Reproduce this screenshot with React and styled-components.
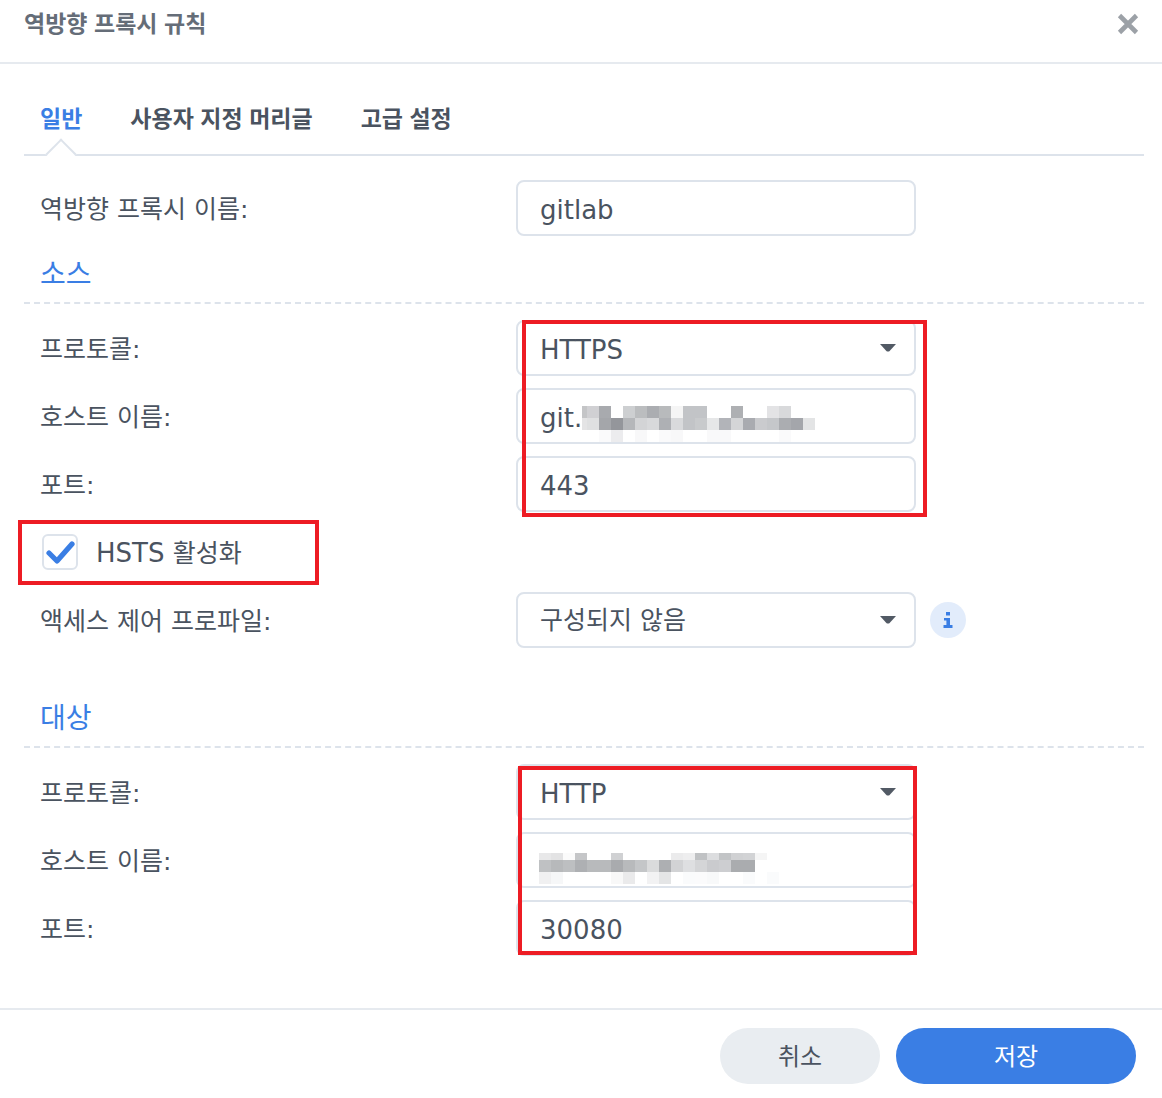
import React from "react";
import styled, { createGlobalStyle } from "styled-components";

const fontStack = `"DejaVu Sans", "Noto Sans CJK KR", sans-serif`;

const GlobalStyle = createGlobalStyle`
  * { box-sizing: border-box; }
  html, body { margin: 0; background: #fff; }
  body { font-family: ${fontStack}; color: #4a5360; }
`;

const gitMosaic = [
  ["#c4c5c7", "#d0d0d3", "#a8aaae", "#fff", "#cdcfd1", "#bbbdbf", "#abadb1", "#b8babc", "#f5f5f5", "#c2c4c7", "#c2c4c7", "#fff", "#fff", "#aeb0b3", "#fff", "#fff", "#e3e3e5", "#d8d9db"],
  ["#e4e4e5", "#dfe0e1", "#a4a6aa", "#94969b", "#b5b7ba", "#d3d4d6", "#d8d9db", "#aeb0b4", "#d9dadc", "#c2c4c7", "#c8cacc", "#e6e7e8", "#b2b4b9", "#d4d5d7", "#a9abb0", "#cacbce", "#c5c7ca", "#abadb1", "#a4a6ab", "#e3e4e5"],
  ["#fff", "#fff", "#fafafb", "#ececee", "#fff", "#f8f8f9", "#fff", "#fafafb", "#f8f8f9", "#fff", "#fff", "#f9f9fa", "#f9f9fa", "#fff", "#fff", "#fff", "#fff", "#fafafb"],
];

const hostMosaic = [
  ["#e8e8e9", "#e3e3e4", "#fbfbfb", "#c5c6c8", "#fff", "#fff", "#d0d1d3", "#fff", "#fff", "#fff", "#fff", "#ebebec", "#eeeeef", "#c0c2c4", "#dcdddf", "#c2c4c6", "#d0d1d3", "#d2d3d5", "#f5f5f5"],
  ["#bfc1c3", "#b7b9bb", "#bdbfc1", "#aeb0b3", "#b8babc", "#b8babc", "#a9abae", "#b8babc", "#c4c6c8", "#dadbdc", "#adafb2", "#d2d3d5", "#dedfe1", "#d4d5d7", "#cacbce", "#cdced1", "#aaacaf", "#aaacaf", "#fff"],
  ["#f0f0f1", "#f6f7f8", "#fff", "#fff", "#fff", "#fff", "#f8f8f8", "#eaeaeb", "#fff", "#f2f2f3", "#e4e5e6", "#fff", "#fafbfc", "#fbfbfc", "#f8f9fa", "#fff", "#fff", "#fafbfc", "#fff", "#fafbfc"],
];

// first column and first row of a pixelated patch can be cut short
function Mosaic({ rows, firstCol = 12, firstRow = 12, shift = 0 }) {
  const cell = 12;
  const cols = rows.reduce((m, r) => Math.max(m, r.length), 0);
  const width = firstCol + (cols - 1) * cell;
  const height = firstRow + (rows.length - 1) * cell;
  return (
    <MosaicSvg width={width} height={height} $shift={shift} aria-hidden="true">
      {rows.map((row, y) =>
        row.map((color, x) => (
          <rect
            key={`${x}-${y}`}
            x={x === 0 ? 0 : firstCol + (x - 1) * cell}
            y={y === 0 ? 0 : firstRow + (y - 1) * cell}
            width={x === 0 ? firstCol : cell}
            height={y === 0 ? firstRow : cell}
            fill={color}
          />
        ))
      )}
    </MosaicSvg>
  );
}

function Caret() {
  return (
    <CaretIcon viewBox="0 0 16 8" aria-hidden="true">
      <path d="M0 0 H16 L9.4 7.2 Q8 8 6.6 7.2 Z" fill="#525a65" />
    </CaretIcon>
  );
}

function App() {
  return (
    <Dialog>
      <GlobalStyle />
      <Header>
        <Title>역방향 프록시 규칙</Title>
        <CloseIcon viewBox="0 0 22 22" aria-hidden="true">
          <path d="M2.5 2.5 L19.5 19.5 M19.5 2.5 L2.5 19.5" stroke="#9ca1a7" strokeWidth="4.6" fill="none" />
        </CloseIcon>
      </Header>

      <Body>
        <Tabs>
          <Tab $active>일반</Tab>
          <Tab>사용자 지정 머리글</Tab>
          <Tab>고급 설정</Tab>
        </Tabs>

        <NameRow>
          <Label>역방향 프록시 이름:</Label>
          <Field>gitlab</Field>
        </NameRow>

        <SectionTitle>소스</SectionTitle>
        <Rows>
          <Row>
            <Label>프로토콜:</Label>
            <Field>HTTPS<Caret /></Field>
          </Row>
          <Row>
            <Label>호스트 이름:</Label>
            <Field>git.<Mosaic rows={gitMosaic} firstCol={5} /></Field>
          </Row>
          <Row>
            <Label>포트:</Label>
            <Field>443</Field>
          </Row>
        </Rows>

        <CheckRow>
          <CheckBox>
            <svg width="30" height="26" viewBox="0 0 30 26" aria-hidden="true">
              <path d="M4 14 L12 22 L27 5" stroke="#3a7ee4" strokeWidth="5.2" fill="none" strokeLinecap="round" strokeLinejoin="round" />
            </svg>
          </CheckBox>
          <CheckLabel>HSTS <Hangul>활성화</Hangul></CheckLabel>
        </CheckRow>

        <AccessRow>
          <Label>액세스 제어 프로파일:</Label>
          <Field><FieldHangul>구성되지 않음</FieldHangul><Caret /></Field>
          <InfoBadge>
            <svg width="12" height="16" viewBox="0 0 12 16" aria-hidden="true">
              <path d="M4 0 H8 V3.6 H4 Z M2 6 H8 V13 H10.5 V16 H1.5 V13 H4.4 V8.6 H2 Z" fill="#3a7ee4" />
            </svg>
          </InfoBadge>
        </AccessRow>

        <TargetTitle>대상</TargetTitle>
        <Rows>
          <Row>
            <Label>프로토콜:</Label>
            <Field>HTTP<Caret /></Field>
          </Row>
          <Row>
            <Label>호스트 이름:</Label>
            <Field><Mosaic rows={hostMosaic} firstRow={7} shift={-1} /></Field>
          </Row>
          <Row>
            <Label>포트:</Label>
            <Field>30080</Field>
          </Row>
        </Rows>
      </Body>

      <Footer>
        <CancelButton>취소</CancelButton>
        <SaveButton>저장</SaveButton>
      </Footer>

      <SourceMark />
      <HstsMark />
      <TargetMark />
    </Dialog>
  );
}

const Dialog = styled.div`
  position: relative;
  width: 1162px;
  height: 1098px;
  background: #fff;
  overflow: hidden;
`;

const Header = styled.header`
  height: 64px;
  padding: 0 23px 14px 24px;
  border-bottom: 2px solid #e6eaef;
  display: flex;
  align-items: center;
  justify-content: space-between;
`;

const Title = styled.h1`
  margin: 0;
  font-size: 23px;
  line-height: 24px;
  font-weight: 700;
  word-spacing: -1.5px;
  color: #656d78;
`;

const CloseIcon = styled.svg`
  width: 22px;
  height: 22px;
`;

const Body = styled.main`
  padding: 0 18px 0 24px;
`;

const Tabs = styled.nav`
  height: 92px;
  padding: 36px 0 0 16px;
  border-bottom: 2px solid #dde3eb;
  display: flex;
  gap: 48px;
`;

const Tab = styled.div`
  position: relative;
  height: 36px;
  font-size: 23px;
  line-height: 38px;
  font-weight: 700;
  word-spacing: -1.5px;
  color: ${(p) => (p.$active ? "#3a7ee4" : "#4a5360")};

  ${(p) =>
    p.$active &&
    `
    &::after {
      content: "";
      position: absolute;
      left: 10px;
      bottom: -29px;
      width: 20px;
      height: 20px;
      background: #fff;
      border-top: 2px solid #dde3eb;
      border-left: 2px solid #dde3eb;
      transform: rotate(45deg);
    }
  `}
`;

const Row = styled.div`
  display: grid;
  grid-template-columns: 476px 400px;
  grid-template-rows: 56px;
  align-items: start;
  padding-left: 16px;
`;

const NameRow = styled(Row)`
  margin-top: 24px;
`;

const AccessRow = styled(Row)`
  grid-template-columns: 476px 400px 36px;
`;

const Label = styled.label`
  height: 56px;
  font-size: 25px;
  line-height: 56px;
  padding-top: 2px;
  color: #4a5360;
  white-space: nowrap;
`;

const Field = styled.div`
  height: 56px;
  padding: 4px 18px 0 22px;
  border: 2px solid #dde3eb;
  border-radius: 8px;
  background: #fff;
  display: flex;
  align-items: center;
  justify-content: space-between;
  font-size: 26px;
  color: #4a5360;
  white-space: nowrap;
`;

const Hangul = styled.span`
  font-size: 25px;
`;

const FieldHangul = styled(Hangul)`
  margin-bottom: 8px;
`;

const CaretIcon = styled.svg`
  width: 16px;
  height: 8px;
  margin-bottom: 4px;
`;

const MosaicSvg = styled.svg`
  display: block;
  flex: none;
  margin-right: auto;
  margin-top: 12px;
  margin-left: ${(p) => p.$shift}px;
`;

const Rows = styled.div`
  display: flex;
  flex-direction: column;
  gap: 12px;
  margin-top: 16px;
`;

const SectionTitle = styled.h2`
  margin: 14px 0 0;
  height: 54px;
  padding: 7px 0 0 16px;
  font-size: 28px;
  line-height: 36px;
  font-weight: 400;
  color: #3a7ee4;
  border-bottom: 2px dashed #dde3eb;
`;

const TargetTitle = styled(SectionTitle)`
  margin-top: 46px;
`;

const CheckRow = styled.div`
  height: 36px;
  margin: 22px 0 22px 18px;
  display: flex;
  align-items: center;
  gap: 18px;
`;

const CheckBox = styled.span`
  width: 36px;
  height: 36px;
  border: 2px solid #dde3eb;
  border-radius: 6px;
  display: flex;
  align-items: center;
  justify-content: center;
`;

const CheckLabel = styled.span`
  margin-bottom: 2px;
  font-size: 26px;
  color: #4a5360;
`;

const InfoBadge = styled.span`
  width: 36px;
  height: 36px;
  margin: 10px 0 0 14px;
  border-radius: 50%;
  background: #e2ecfb;
  display: flex;
  align-items: center;
  justify-content: center;
`;

const Footer = styled.footer`
  position: absolute;
  left: 0;
  right: 0;
  top: 1008px;
  height: 90px;
  padding: 18px 26px 0 0;
  border-top: 2px solid #e6eaef;
  display: flex;
  justify-content: flex-end;
  gap: 16px;
`;

const CancelButton = styled.button`
  width: 160px;
  height: 56px;
  padding: 0 0 4px;
  border: 0;
  border-radius: 28px;
  background: #e9edf1;
  color: #4a5360;
  font: 24px ${fontStack};
`;

const SaveButton = styled(CancelButton)`
  width: 240px;
  background: #3a7ee4;
  color: #fff;
`;

const Mark = styled.div`
  position: absolute;
  border: 4px solid #ed1c24;
  pointer-events: none;
`;

const SourceMark = styled(Mark)`
  left: 522px;
  top: 320px;
  width: 405px;
  height: 197px;
`;

const HstsMark = styled(Mark)`
  left: 18px;
  top: 520px;
  width: 301px;
  height: 65px;
`;

const TargetMark = styled(Mark)`
  left: 518px;
  top: 766px;
  width: 399px;
  height: 189px;
`;

export default App;
